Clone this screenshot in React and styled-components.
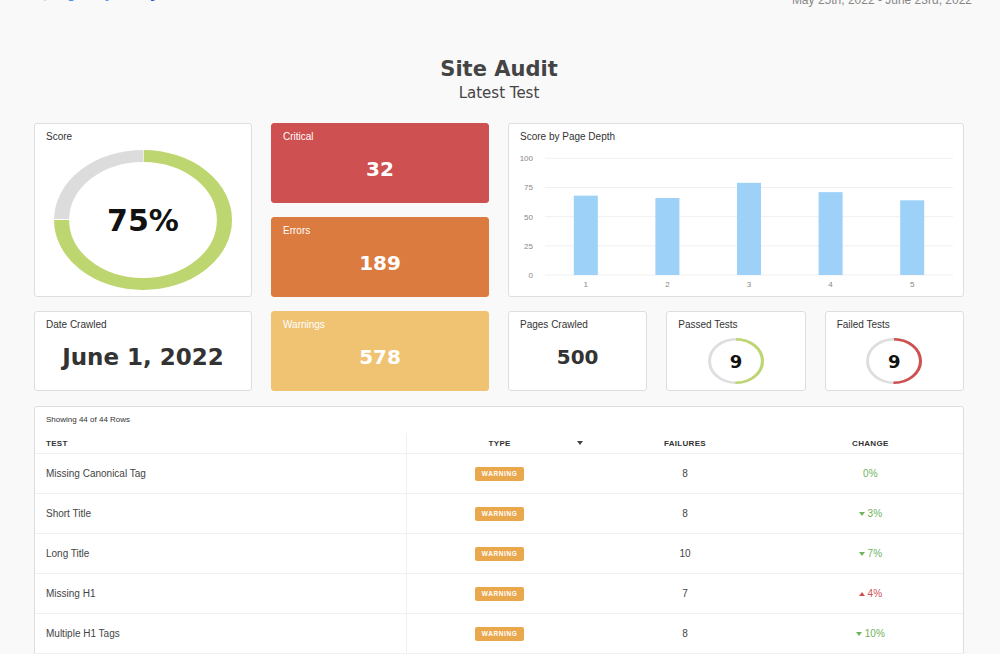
import styled, { createGlobalStyle } from 'styled-components';

const GlobalStyle = createGlobalStyle`
  body {
    margin: 0;
    background: #fff;
    font-family: "Liberation Sans", Arial, sans-serif;
  }
`;

const wide = `"DejaVu Sans", "Liberation Sans", sans-serif`;

const Page = styled.div`
  height: 654px;
  overflow: hidden;
  background: #f9f9f9;
  padding: 0 36px 0 34px;
  box-sizing: border-box;
`;

const TopBar = styled.div`
  display: flex;
  justify-content: space-between;
  align-items: flex-start;
  margin: -20px -8px 0 4px;
  height: 24px;
`;

const Logo = styled.div`
  display: flex;
  align-items: flex-end;
  gap: 4px;
  font-size: 18px;
  line-height: 20px;
  padding-top: 1px;
  color: #4a8ef0;
  span { color: #1a5fd8; font-weight: bold; }
`;

const DateRange = styled.div`
  font-size: 12px;
  line-height: 14px;
  padding-top: 13px;
  color: #888;
`;

const Heading = styled.div`
  text-align: center;
  margin-top: 52px;
  color: #444;
  font-family: ${wide};
`;

const Title = styled.h1`
  margin: 0;
  font-size: 21px;
  line-height: 26px;
  font-weight: bold;
`;

const Subtitle = styled.h2`
  margin: 2px 0 0;
  font-size: 15px;
  line-height: 18px;
  font-weight: normal;
`;

const Grid = styled.div`
  display: grid;
  grid-template-columns: 218px 218px 1fr 1fr 1fr;
  grid-template-rows: 80px 80px 80px;
  column-gap: 19px;
  row-gap: 14px;
  margin-top: 21px;
`;

const Card = styled.div`
  background: ${p => p.$bg || '#fff'};
  border: 1px solid ${p => p.$bg || '#dedede'};
  border-radius: 3px;
  box-sizing: border-box;
  padding: 7px 11px;
  grid-column: ${p => p.$col || 'auto'};
  grid-row: ${p => p.$row || 'auto'};
  color: ${p => (p.$bg ? '#fff' : '#333')};
  display: flex;
  flex-direction: column;
`;

const Label = styled.div`
  font-size: 10px;
  line-height: 12px;
`;

const Value = styled.div`
  margin-top: 14px;
  text-align: center;
  font-family: ${wide};
  font-weight: bold;
  font-size: ${p => p.$size || 20}px;
  line-height: 24px;
  color: ${p => p.$color || 'inherit'};
`;

const Stack = styled.div`
  display: grid;
  place-items: center;
  margin: 7px auto 0;
  > * { grid-area: 1 / 1; }
`;

const RingNumber = styled.div`
  font-family: ${wide};
  font-weight: bold;
  font-size: ${p => p.$size}px;
  color: #111;
`;

const ChartSvg = styled.svg`
  display: block;
  margin: 9px 0 0 -6px;
  font-family: "Liberation Sans", Arial, sans-serif;
`;

const TableCard = styled.div`
  margin-top: 15px;
  background: #fff;
  border: 1px solid #dedede;
  border-radius: 3px;
`;

const Caption = styled.div`
  font-size: 8px;
  line-height: 10px;
  padding: 8px 11px;
  color: #333;
`;

const Row = styled.div`
  display: grid;
  grid-template-columns: 372px 1fr 1fr 1fr;
  height: ${p => (p.$head ? 21 : 40)}px;
  border-bottom: 1px solid #f0f0f0;
  box-sizing: border-box;
  font-size: ${p => (p.$head ? 8 : 10)}px;
  font-weight: ${p => (p.$head ? 'bold' : 'normal')};
  letter-spacing: ${p => (p.$head ? '0.3px' : '0')};
  color: ${p => (p.$head ? '#333' : '#444')};
`;

const Cell = styled.div`
  display: flex;
  align-items: center;
  justify-content: ${p => (p.$left ? 'flex-start' : 'center')};
  padding-left: ${p => (p.$left ? '11px' : '0')};
  border-right: ${p => (p.$left ? '1px solid #f0f0f0' : 'none')};
  position: relative;
  color: ${p => p.$color || 'inherit'};
  gap: 3px;
`;

const SortCaret = styled.span`
  position: absolute;
  right: 9px;
  top: 8px;
  width: 0;
  height: 0;
  border-left: 3px solid transparent;
  border-right: 3px solid transparent;
  border-top: 4px solid #444;
`;

const Badge = styled.span`
  background: #e9a84d;
  color: #fff;
  border-radius: 2px;
  font-size: 6.5px;
  font-weight: bold;
  letter-spacing: 0.6px;
  width: 49px;
  height: 14px;
  display: inline-flex;
  align-items: center;
  justify-content: center;
`;

const Arrow = styled.span`
  width: 0;
  height: 0;
  border-left: 3px solid transparent;
  border-right: 3px solid transparent;
  ${p => (p.$up ? 'border-bottom: 4px solid currentColor;' : 'border-top: 4px solid currentColor;')}
`;

function Donut() {
  const r = 45.75;
  const c = 2 * Math.PI * r;
  const green = 0.75 * c - 0.8;
  const grey = 0.25 * c - 0.8;
  return (
    <svg width="178" height="140" viewBox="0 0 100 100" preserveAspectRatio="none">
      <circle cx="50" cy="50" r={r} fill="none" stroke="#bed66f" strokeWidth="8.5"
        strokeDasharray={`${green} ${c}`} strokeDashoffset={-0.4} transform="rotate(-90 50 50)" />
      <circle cx="50" cy="50" r={r} fill="none" stroke="#dcdcdc" strokeWidth="8.5"
        strokeDasharray={`${grey} ${c}`} strokeDashoffset={-(0.75 * c + 0.4)} transform="rotate(-90 50 50)" />
    </svg>
  );
}

function Ring({ color }) {
  const r = 47.3;
  const c = 2 * Math.PI * r;
  return (
    <svg width="56" height="46" viewBox="0 0 100 100" preserveAspectRatio="none">
      <circle cx="50" cy="50" r={r} fill="none" stroke="#dedede" strokeWidth="5.4" />
      <circle cx="50" cy="50" r={r} fill="none" stroke={color} strokeWidth="5.4"
        strokeDasharray={`${c / 2} ${c}`} transform="rotate(-90 50 50)" />
    </svg>
  );
}

const bars = [68, 66, 79, 71, 64];

function BarChart() {
  const top = 6.3, base = 123, x0 = 31, x1 = 439;
  const band = (x1 - x0) / 5;
  const y = v => base - (v / 100) * (base - top);
  return (
    <ChartSvg width="444" height="140">
      {[0, 25, 50, 75, 100].map(t => (
        <g key={t}>
          <line x1={x0} x2={x1} y1={y(t)} y2={y(t)} stroke="#f0f0f0" strokeWidth="1" />
          <text x="19" y={y(t) + 3} fontSize="8" fill="#888" textAnchor="end">{t}</text>
        </g>
      ))}
      {bars.map((v, i) => {
        const cx = x0 + band * i + band / 2;
        return (
          <g key={i}>
            <rect x={cx - 12} y={y(v)} width="24" height={base - y(v)} fill="#9dd1f8" />
            <text x={cx} y="135" fontSize="8" fill="#888" textAnchor="middle">{i + 1}</text>
          </g>
        );
      })}
    </ChartSvg>
  );
}

const rows = [
  { test: 'Missing Canonical Tag', failures: 8, change: '0%' },
  { test: 'Short Title', failures: 8, change: '3%', dir: 'down' },
  { test: 'Long Title', failures: 10, change: '7%', dir: 'down' },
  { test: 'Missing H1', failures: 7, change: '4%', dir: 'up' },
  { test: 'Multiple H1 Tags', failures: 8, change: '10%', dir: 'down' },
];

export default function App() {
  return (
    <>
      <GlobalStyle />
      <Page>
        <TopBar>
          <Logo>
            <svg width="14" height="14" viewBox="0 0 14 14">
              <circle cx="7" cy="7" r="5.5" fill="none" stroke="#4a8ef0" strokeWidth="1.5" />
            </svg>
            <div>agency<span>analytics</span></div>
          </Logo>
          <DateRange>May 25th, 2022 - June 23rd, 2022</DateRange>
        </TopBar>

        <Heading>
          <Title>Site Audit</Title>
          <Subtitle>Latest Test</Subtitle>
        </Heading>

        <Grid>
          <Card $col="1" $row="1 / span 2">
            <Label>Score</Label>
            <Stack>
              <Donut />
              <RingNumber $size={30}>75%</RingNumber>
            </Stack>
          </Card>
          <Card $bg="#cf5050" $col="2" $row="1">
            <Label>Critical</Label>
            <Value>32</Value>
          </Card>
          <Card $bg="#dc7b3f" $col="2" $row="2">
            <Label>Errors</Label>
            <Value>189</Value>
          </Card>
          <Card $col="3 / span 3" $row="1 / span 2">
            <Label>Score by Page Depth</Label>
            <BarChart />
          </Card>

          <Card>
            <Label>Date Crawled</Label>
            <Value $size={23} $color="#333">June 1, 2022</Value>
          </Card>
          <Card $bg="#f0c373">
            <Label>Warnings</Label>
            <Value>578</Value>
          </Card>
          <Card>
            <Label>Pages Crawled</Label>
            <Value $size={20} $color="#333">500</Value>
          </Card>
          <Card>
            <Label>Passed Tests</Label>
            <Stack>
              <Ring color="#bed66f" />
              <RingNumber $size={18}>9</RingNumber>
            </Stack>
          </Card>
          <Card>
            <Label>Failed Tests</Label>
            <Stack>
              <Ring color="#cf5050" />
              <RingNumber $size={18}>9</RingNumber>
            </Stack>
          </Card>
        </Grid>

        <TableCard>
          <Caption>Showing 44 of 44 Rows</Caption>
          <Row $head>
            <Cell $left>TEST</Cell>
            <Cell>TYPE<SortCaret /></Cell>
            <Cell>FAILURES</Cell>
            <Cell>CHANGE</Cell>
          </Row>
          {rows.map(r => (
            <Row key={r.test}>
              <Cell $left>{r.test}</Cell>
              <Cell><Badge>WARNING</Badge></Cell>
              <Cell>{r.failures}</Cell>
              <Cell $color={r.dir === 'up' ? '#cf5050' : '#6fb35b'}>
                {r.dir && <Arrow $up={r.dir === 'up'} />}
                {r.change}
              </Cell>
            </Row>
          ))}
        </TableCard>
      </Page>
    </>
  );
}
